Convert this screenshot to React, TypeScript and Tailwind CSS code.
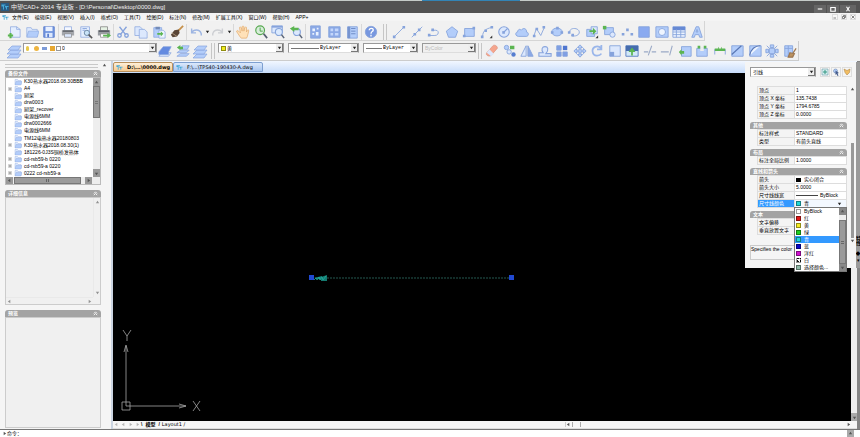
import type { ReactNode } from "react";

const B = "#86a3dc";
const F = "#b3cdfa";
const L = "#dce8fd";
const G = "#5bb551";

const art: Record<string, ReactNode> = {
  new: (<><path d="M4 2h7l4 3v9H4z" fill="#e4eefe" stroke={B} strokeWidth=".8" /><path d="M11 2v3h4" fill="none" stroke={B} strokeWidth=".8" /><path d="M4 9v6M1 12h6" stroke={G} strokeWidth="2.4" /></>),
  open: (<><path d="M2 13V3h5l1 2h6v8z" fill={L} stroke={B} strokeWidth=".7" /><path d="M2 14 4 7h12l-2 7z" fill={F} stroke={B} strokeWidth=".7" /></>),
  save: (<><path d="M2 2h12v12H2z" fill="#7094df" stroke="#5a7dcc" /><path d="M4 2h8v5H4z" fill="#e8f0ff" /><path d="M4 9h8v5H4z" fill={L} /><path d="M6 10h2v4H6z" fill="#5a7dcc" /></>),
  print: (<><path d="M4 2h8v5H4z" fill="#f5f8ff" stroke={B} strokeWidth=".8" /><path d="M1 6h14v6H1z" fill="#a4a7ac" /><path d="M2 6h12v2H2z" fill="#696c72" /><path d="M4 10h8v4H4z" fill={L} stroke="#888" strokeWidth=".8" /></>),
  preview: (<><path d="M2 2h10v12H2z" fill="#e4eefe" stroke={B} strokeWidth=".8" /><path d="M4 4h5M4 6h3" stroke={B} /><circle cx="9" cy="9" r="3" fill="#c9e3f8" stroke="#66819e" /><path d="m11 11 4 4" stroke="#555" strokeWidth="1.8" /></>),
  plot: (<><path d="M4 2h8v5H4z" fill="#e5f1e3" stroke="#777" strokeWidth=".8" /><path d="M1 6h14v6H1z" fill="#999da2" /><path d="M2 6h12v2H2z" fill="#5b5e64" /><path d="M4 10h8v4H4z" fill="#fff" stroke="#888" strokeWidth=".8" /><path d="M7 11h5V9l4 3-4 3v-2H7z" fill={G} /></>),
  cut: (<g fill="none" stroke="#86a3dc" strokeWidth="1.5"><path d="m4 2 7 9M12 2 5 11" /><circle cx="4" cy="12" r="2" /><circle cx="12" cy="12" r="2" /></g>),
  copy: (<g fill={L} stroke={B} strokeWidth=".8"><path d="M1 2h6l3 3v7H1z" /><path d="M6 5h6l3 3v7H6z" /></g>),
  paste: (<><path d="M2 3h9v11H2z" fill={F} stroke={B} strokeWidth=".8" /><path d="M4 2h5v3H4z" fill="#728bb8" /><path d="M8 6h5l2 2v7H8z" fill="#edf4ff" stroke={B} strokeWidth=".8" /><path d="M6 9h4V7l3 3-3 3v-2H6z" fill={G} /></>),
  brush: (<><path d="m15 1-6 6" stroke="#c6904a" strokeWidth="2" /><path d="m5 6 5-1 1 4-3 4-5 1-2-3z" fill="#594536" /><path d="m2 9 6 4" stroke="#b09980" /></>),
  undo: (<path d="M3 4v5h5M3 9c2-4 9-5 11 1v2" fill="none" stroke="#9db5e2" strokeWidth="1.6" />),
  redo: (<path d="M13 4v5H8M13 9C11 5 4 4 2 10v2" fill="none" stroke="#cdcfd3" strokeWidth="1.6" />),
  hand: (<path d="M5 14 1 8c-1-2 1-2 2-1l2 2-1-6c0-1 1.500-1 2 0l1 4V2c0-1 2-1 2 0v5l1-4c.5-1 2-1 2 0v5l1-2c.5-1 2-.5 1.500 1L13 13l-1 2H6z" fill="#ffe1b8" stroke="#e2aa6b" strokeWidth=".8" />),
  zoomRt: (<><circle cx="7" cy="6" r="5" fill="#d7edda" stroke="#56a84f" strokeWidth="1.3" /><path d="M7 3v4h3" fill="none" stroke="#429c3e" /><path d="m11 10 4 5" stroke="#555f70" strokeWidth="2" /></>),
  zoomWin: (<><path d="M1 1h12v8H1z" fill={L} stroke={B} /><path d="M1 1h12v2H1z" fill={B} /><circle cx="9" cy="8" r="4" fill="#dbeafe" stroke="#86a4da" strokeWidth="1.300" /><path d="m12 11 3 4" stroke="#5b6679" strokeWidth="1.800" /></>),
  zoomPrev: (<><circle cx="9" cy="8" r="4" fill={L} stroke={B} strokeWidth="1.300" /><path d="m12 11 3 4" stroke="#5b6679" strokeWidth="1.800" /><path d="M1 4l5-3v2h5v3H6v2z" fill={G} /></>),
  props: (<><path d="M3 1h11v14H3z" fill="#8ba9e6" stroke={B} /><path d="M5 4h3v3H5zM9 8h3v4H9zM5 9h2v2H5zM10 3h2v2h-2z" fill="#e9f2ff" /></>),
  center: (<><path d="M2 2h13v12H2z" fill="#8ba9e6" stroke={B} /><path d="M4 4h3v3H4zM9 4h4v3H9zM4 9h3v3H4zM9 9h4v3H9z" fill="#c4d7fb" /></>),
  palette: (<><path d="M3 2h11v13H3z" fill={F} stroke={B} /><path d="M3 2h3v13H3z" fill="#7794cf" /><path d="M7 4h5M7 7h5M7 10h5" stroke="#6684c0" /></>),
  help: (<><circle cx="8" cy="8" r="6.500" fill="#7797df" stroke="#89a3da" /><path d="M6 6c0-3 5-3 4.500 0C10 8 8 7 8 10M8 11v2" fill="none" stroke="#fff" strokeWidth="1.500" /></>),
  line: (<><path d="M3 13 13 3" stroke={B} /><path d="M1 12h3v3H1zM12 1h3v3h-3z" fill={B} /></>),
  xline: (<><path d="M2 14 14 2" stroke={B} /><path d="M4 9h3v3H4zM9 4h3v3H9z" fill={B} /></>),
  pline: (<><path d="M2 12h7c5 0 5-6 1-6H5" fill="none" stroke={B} /><path d="M1 10h3v3H1zM5 4h3v3H5z" fill={B} /></>),
  polygon: (<path d="m8 2 6.500 5L12 14H4L1.500 7z" fill={F} stroke={B} />),
  rect: (<><path d="M3 4h11v9H3z" fill={F} stroke={B} /><path d="M1 11h3v3H1zM12 2h3v3h-3z" fill={B} /></>),
  arc: (<><path d="M3 13C3 7 7 4 13 3" fill="none" stroke={B} /><path d="M1 12h3v3H1zM5 5h3v3H5zM12 1h3v3h-3z" fill={B} /><path d="M14 12v3h-3z" fill="#333" /></>),
  circle: (<><circle cx="8" cy="8" r="6" fill={L} stroke={B} strokeWidth="1.200" /><path d="m8 8 4-4" stroke={B} strokeWidth="1.300" /><path d="M6 7h3v3H6z" fill={B} /></>),
  cloud: (<path d="M4 13c-4 0-4-5-1-5 0-3 3-4 4-2 3-4 7-1 6 2 3 0 3 5 0 5z" fill={F} stroke={B} />),
  spline: (<><path d="M2 13 5 4l5 8 4-9" fill="none" stroke={B} /><path d="M1 11h3v3H1zM4 3h3v3H4zM12 1h3v3h-3z" fill={B} /></>),
  ellipse: (<><ellipse cx="8" cy="8" rx="6" ry="4.500" fill={F} stroke={B} /><path d="M1 7h3v3H1zM12 7h3v3h-3zM7 2h3v3H7z" fill={B} /></>),
  ellArc: (<><path d="M3 8c0-6 12-5 11 1-1 4-7 4-9 3" fill="none" stroke={B} /><path d="M1 7h3v3H1zM5 10h3v3H5z" fill={B} /></>),
  insert: (<><path d="M2 5h9v8H2z" fill={F} stroke={B} /><path d="M7 2h7v8H7z" fill={L} stroke={B} /><path d="M5 6h4V3l4 4-4 4V8H5z" fill={G} /><path d="M15 12v3h-3z" fill="#333" /></>),
  block: (<><path d="M3 3h10v8H3z" fill={F} stroke={B} /><circle cx="12" cy="11" r="3" fill={L} stroke={B} /><path d="M1 1h4v4H1z" fill={G} /></>),
  point: (<path d="M7 4h3v3H7zM2 9h3v3H2zM12 9h3v3h-3z" fill={B} />),
  hatch: (<path d="M2 2h12v12H2z" fill="#8aaaf0" stroke={B} />),
  region: (<><path d="M1 2h14v12H1z" fill={F} stroke={B} /><circle cx="8" cy="8" r="4" fill="#eff5ff" stroke={B} /></>),
  table: (<><path d="M1 2h14v12H1z" fill="#edf4ff" stroke={B} /><path d="M1 2h14v4H1z" fill="#6689d4" /><path d="M1 8h14M1 11h14M5 5v9M10 5v9" stroke={B} /></>),
  text: (<path d="M2 14 7 2h3l4 12h-3l-1-3H6l-1 3zM7 8h2L8 5z" fill={F} stroke={B} fillRule="evenodd" />),
  layer: (<g fill={F} stroke={B} strokeWidth=".7"><path d="m1 15 4-4h10l-3 4z" /><path d="m1 11 4-4h10l-3 4z" /><path d="m2 7 4-4h9l-3 4z" /></g>),
  layerA: (<g stroke={B} strokeWidth=".8"><path d="m1 14 4-4h10l-3 4z" fill={L} /><path d="m1 9 5-6h9l-3 6v3H1z" fill="#638ae0" /></g>),
  layerB: (<><path d="m1 14 4-3h10l-3 3zM1 10l4-3h10l-3 3zM5 6l2-4h8l-2 4z" fill={F} stroke={B} strokeWidth=".8" /><path d="m1 4 4-3v2h3v3H5v1z" fill={G} /></>),
  erase: (<><path d="m2 10 7-8c2-2 6 1 5 3l-7 8c-2 2-7 0-5-3z" fill="#f5a58d" stroke="#d78f7b" strokeWidth=".7" /><path d="m5 6 5 5-3 3-5-4z" fill={L} /></>),
  copyObj: (<><circle cx="4" cy="4" r="2.500" fill={F} stroke={B} /><path d="M8 2h5v4H8z" fill={G} /><circle cx="7" cy="9" r="2.500" fill={L} stroke={B} /><circle cx="12" cy="12" r="2.500" fill="#567ed0" /></>),
  mirror: (<><path d="M7 2v12H1z" fill={L} stroke={B} /><path d="M9 2v12h6z" fill="#8ba9e6" stroke={B} /></>),
  offset: (<path d="M1 14h14v-3H9c4-5 2-8-1-8S3 6 6 10H1z" fill={L} stroke={B} strokeWidth="1.200" />),
  array: (<><path d="M2 2h5v5H2zM2 9h5v5H2zM9 9h5v5H9z" fill="#7f9fe4" stroke={B} /><path d="M9 2h5v5H9z" fill="#4f76cf" /></>),
  move: (<path d="m8 1 3 3H9v3h3V5l3 3-3 3V9H9v3h2l-3 3-3-3h2V9H4v2L1 8l3-3v2h3V4H5z" fill={F} stroke={B} />),
  rotate: (<path d="M13 5C8 0 2 4 3 9c1 6 8 5 10 2M13 1v5H8" fill="none" stroke="#9ab6ea" strokeWidth="2" />),
  scale: (<><path d="M2 2h12v12H2z" fill={L} stroke={B} /><path d="M2 9h5v5H2z" fill={B} /></>),
  stretch: (<><path d="M1 2h14v12H1z" fill="#d2e8f8" stroke="#557abf" /><path d="M1 2h14v6H1z" fill="#456cad" /><path d="m8 4 4 5H9v4H7V9H4z" fill={G} /></>),
  trim: (<path d="M1 9h5M10 9h5M6 13l4-11" fill="none" stroke="#9aa9c6" strokeWidth="1.200" />),
  extend: (<path d="M1 9h9M11 13l3-11" fill="none" stroke="#9aa9c6" strokeWidth="1.200" />),
  breakAt: (<><path d="M4 3h11v11H4z" fill={F} stroke={B} /><path d="m1 9 3-3v2h3v3H4v2z" fill={G} /></>),
  breakObj: (<><path d="M2 5h12v9H2z" fill={F} stroke={B} /><path d="M6 4h4v4H6z" fill="#eee" /><path d="M3 2h3v3H3zM10 2h3v3h-3z" fill={G} /></>),
  join: (<><path d="M2 12V6M14 12V6" stroke={B} /><path d="M2 5h4V3l2 3 2-3v2h4v3H2z" fill={G} /></>),
  chamfer: (<><path d="M2 2h13v12H2z" fill={F} stroke={B} /><path d="M2 12 13 2" stroke="#5876b4" strokeWidth="1.300" /></>),
  fillet: (<><path d="M2 2h13v12H2z" fill={F} stroke={B} /><path d="M2 13C3 6 8 2 14 2" fill="#edf4ff" stroke="#5876b4" strokeWidth="1.200" /></>),
  explode: (<path d="M5 5h6v6H5zM6 1h4v3H6zM6 12h4v3H6zM1 6h3v4H1zM12 6h3v4h-3zM2 2l3 3M14 2l-3 3M2 14l3-3M14 14l-3-3" fill={F} stroke={B} />),
  edit: (<><path d="M2 2h9v12H2z" fill={F} stroke={B} /><path d="M2 5h9M6 2v12" stroke={B} /><path d="m15 5-4 6M8 10l5 1-2 4H6z" stroke="#9d7852" fill="#bc9260" strokeWidth="1.400" /></>),
  zw: (<path d="M1 3h8v2H6v8H4V7H1zM8 6h7v2h-3v5h-2V9H8z" fill="#45a9d6" />),
  pin: (<><path d="M2 2h12v12H2z" fill="#d9f0f0" stroke="#4c8a99" /><path d="M8 4v8M4 8h8" stroke="#329682" strokeWidth="2" /></>),
  pick: (<><circle cx="7" cy="6" r="4" fill={F} stroke="#5978a3" /><path d="m7 5 7 5-3 1 2 4-2 1-2-4-2 2z" fill="#455c8c" /></>),
  filter: (<path d="m2 2 6 3 6-3-1 7-5 5-4-5z" fill="#f2bd62" stroke="#a67d3b" />),
};

function Icon({ name, cls = "size-3.5" }: { name: string; cls?: string }) {
  return <svg viewBox="0 0 16 16" className={`${cls} shrink-0`} aria-hidden="true">{art[name]}</svg>;
}

function Tool({ name }: { name: string }) {
  return <button type="button" aria-label={name} className="flex h-4 w-4 shrink-0 items-center justify-center"><Icon name={name} cls={name === "layer" ? "size-4" : "size-3.5"} /></button>;
}

function Group({ names, width }: { names: string[]; width: string }) {
  return <div className={`flex shrink-0 items-center justify-between ${width}`}>{names.map((n) => <Tool key={n} name={n} />)}</div>;
}

function Sep() {
  return <span className="mx-px h-4 w-px shrink-0 bg-[#d8d8d8]" />;
}

function Grip() {
  return <span className="block h-4 w-1 shrink-0 border-x border-[#c6c6c6]" />;
}

function Down() {
  return <svg viewBox="0 0 6 6" className="size-[5px] shrink-0" aria-hidden="true"><path d="M1 2h4L3 5z" fill="#222" /></svg>;
}

function Combo({ label, value, width, children, disabled = false, right = false }: { label: string; value: string; width: string; children?: ReactNode; disabled?: boolean; right?: boolean }) {
  return (
    <label className={`flex h-[10px] shrink-0 items-center gap-px border border-[#999] border-b-[#ddd] pl-0.5 ${width} ${disabled ? "bg-[#f0f0f0] text-[#bbb]" : "bg-white"}`}>
      {children}
      <select aria-label={label} disabled={disabled} className={`h-2 min-w-0 appearance-none bg-transparent ${right ? "w-[24px] font-['Liberation_Mono']" : "flex-1"}`}><option>{value}</option></select>
      <span className="ml-auto flex h-2 w-[7px] items-center justify-center border-r border-b border-[#777] bg-[#eee]"><Down /></span>
    </label>
  );
}

const menus = ["文件(E)", "编辑(E)", "视图(V)", "插入(I)", "格式(O)", "工具(T)", "绘图(D)", "标注(N)", "修改(M)", "扩展工具(X)", "窗口(W)", "帮助(H)", "APP+"];

const files: [string, boolean][] = [
  ["K30热水器2018.08.30BBB", false], ["A4", true], ["厨架", false], ["drw0003", false], ["厨架_recover", false], ["电源线6MM", false], ["drw0002666", false],
  ["电源线6MM", false], ["TM12电热水器20180803", false], ["K30热水器2018.08.30(1)", true], ["181226-0J3S铜桥发热体", false], ["cd-rsb59-b 0220", true], ["cd-rsb59-a 0220", true], ["0222 cd-rsb59-a", true],
];

function Header({ title }: { title: string }) {
  return (
    <h2 className="flex h-[7px] items-center justify-between rounded-t-[3px] bg-[#a3a3a3] px-[3px] font-bold text-white">
      <span>{title}</span>
      <svg viewBox="0 0 6 6" className="size-[5px]" aria-hidden="true"><path d="m1 3 2-2 2 2M1 5l2-2 2 2" fill="none" stroke="white" /></svg>
    </h2>
  );
}

function Arrow({ dir }: { dir: "left" | "right" | "up" | "down" }) {
  const d = { left: "M4 1v4L1 3z", right: "M2 1v4l3-2z", up: "M1 4h4L3 1z", down: "M1 2h4L3 5z" }[dir];
  return <svg viewBox="0 0 6 6" className="size-[5px] shrink-0" aria-hidden="true"><path d={d} fill="#555" /></svg>;
}

function Explorer() {
  return (
    <aside className="flex w-[113px] shrink-0 flex-col border-r-2 border-[#cbd5e2] bg-[#f5f5f5] pl-[5px] pr-[10px]">
      <div className="flex h-[9px] items-center gap-1">
        <span className="h-1 w-[93px] shrink-0 border-y border-[#c9c9c9]" />
        <button type="button" aria-label="隐藏" className="shrink-0"><Arrow dir="up" /></button>
      </div>
      <Header title="备份文件" />
      <div className="border border-[#bbb] bg-white">
        <div className="flex h-[99px]">
          <ul className="flex min-w-0 flex-1 flex-col justify-between overflow-hidden">
            {files.map(([name, plus], i) => (
              <li key={i} className="flex h-[7px] items-center gap-0.5 whitespace-nowrap">
                <span className="ml-px flex w-[5px] shrink-0 justify-center">{plus && <svg viewBox="0 0 5 5" className="size-1"><path d="M.5.5h4v4h-4z" fill="#fff" stroke="#aaa" strokeWidth=".6" /><path d="M1 2.500h3M2.500 1v3" stroke="#555" strokeWidth=".7" /></svg>}</span>
                <Icon name="open" cls="size-2" />
                <span>{name}</span>
              </li>
            ))}
          </ul>
          <div className="flex w-[7px] shrink-0 flex-col bg-[#eee]">
            <span className="flex h-2 items-center justify-center bg-[#999]"><Arrow dir="up" /></span>
            <span className="flex h-8 items-center justify-center border border-[#777] bg-[#9b9b9b]"><span className="h-[3px] w-[3px] border-y border-[#777]" /></span>
            <span className="mt-auto flex h-2 items-center justify-center bg-[#999]"><Arrow dir="down" /></span>
          </div>
        </div>
        <div className="flex h-[7px] gap-px bg-[#eee] pr-2">
          <span className="flex w-[7px] items-center justify-center bg-[#999]"><Arrow dir="left" /></span>
          <span className="flex w-[67px] items-center justify-center border border-[#777] bg-[#9b9b9b]"><span className="h-[3px] w-[3px] border-x border-[#666]" /></span>
          <span className="ml-auto flex w-[7px] items-center justify-center bg-[#999]"><Arrow dir="right" /></span>
        </div>
      </div>
      <div className="mt-[5px]"><Header title="详细信息" /></div>
      <div className="flex h-[108px] flex-col border border-[#ccc] bg-[#f0f0f0]">
        <div className="flex flex-1 justify-end"><div className="flex w-[7px] flex-col items-center justify-between border-l border-[#e5e5e5] py-0.5 opacity-60"><Arrow dir="up" /><Arrow dir="down" /></div></div>
        <div className="mr-[7px] flex h-[7px] items-center justify-between border-t border-[#e5e5e5] px-px opacity-60"><Arrow dir="left" /><Arrow dir="right" /></div>
      </div>
      <div className="mt-[5px]"><Header title="预览" /></div>
      <div className="mb-px flex-1 border border-[#ccc] bg-[#f0f0f0]" />
    </aside>
  );
}

function Ucs() {
  return (
    <svg viewBox="0 0 90 90" className="absolute bottom-[5px] left-[7px] size-[90px]" aria-label="坐标">
      <g fill="none" stroke="#a5a5a5" strokeWidth=".8">
        <path d="M2 76h8v8H2zM6 80V20M4 26l2-7 2 7M6 80h60M59 78l7 2-7 2" />
        <path d="m3 4 4 6 4-6M7 10v5M73 75l7 10M80 75l-7 10" />
      </g>
    </svg>
  );
}

function Rows({ rows }: { rows: [string, ReactNode, boolean?][] }) {
  return (
    <table className="ml-[7px] w-[90px] table-fixed border-collapse">
      <colgroup><col className="w-[37px]" /><col /></colgroup>
      <tbody>
        {rows.map(([k, v, on]) => (
          <tr key={k} className="h-2">
            <th className={`h-2 overflow-hidden whitespace-nowrap border border-[#ddd] p-0 pl-px text-left font-normal ${on ? "bg-[#3399ff] text-white" : "bg-[#f4f4f4]"}`}>{k}</th>
            <td className={`h-2 border border-[#ddd] p-0 pl-px whitespace-nowrap ${on ? "bg-[#f3f8ff]" : "bg-white"}`}>{v}</td>
          </tr>
        ))}
      </tbody>
    </table>
  );
}

const colors: [string, string][] = [["ByBlock", "bg-white"], ["红", "bg-[#e01818]"], ["黄", "bg-[#f6ec22]"], ["绿", "bg-[#20d020]"], ["青", "bg-[#20d8d8]"], ["蓝", "bg-[#0808c8]"], ["洋红", "bg-[#d010d0]"], ["白", "bg-[linear-gradient(45deg,#111_50%,#fff_50%)]"], ["选择颜色...", "bg-[#8fb9a8]"]];

function Swatch({ color }: { color: string }) {
  return <span className={`size-[5px] shrink-0 border border-black/40 ${color}`} />;
}

function Properties() {
  return (
    <section className="absolute top-px right-0 z-10 flex h-[206px] w-[115px] bg-[#f5f5f5]">
      <div className="w-[103px] shrink-0 pl-[5px] pt-[5px]">
        <div className="flex h-[10px] w-[104px] items-center">
          <Combo label="对象" value="引线" width="w-[66px]" />
          <div className="ml-1 flex shrink-0 gap-px">{["pin", "pick", "filter"].map((n) => <button type="button" key={n} aria-label={n} className="flex size-[10px] items-center justify-center border border-[#ddd]"><Icon name={n} cls="size-2" /></button>)}</div>
        </div>
        <div className="mt-[9px] w-[97px]">
          <Rows rows={[["顶点", "1"], ["顶点 X 坐标", "135.7438"], ["顶点 Y 坐标", "1794.6785"], ["顶点 Z 坐标", "0.0000"]]} />
          <div className="mt-[3px]"><Header title="其他" /></div>
          <Rows rows={[["标注样式", "STANDARD"], ["类型", "有箭头直线"]]} />
          <div className="mt-[3px]"><Header title="布局" /></div>
          <Rows rows={[["标注全局比例", "1.0000"]]} />
          <div className="mt-[3px]"><Header title="直线和箭头" /></div>
          <Rows rows={[
            ["箭头", <span className="flex items-center gap-[3px]"><span className="h-1 w-[5px] bg-black" />实心闭合</span>],
            ["箭头大小", "5.0000"],
            ["尺寸线线宽", <span className="flex items-center gap-0.5"><span className="h-px w-[22px] bg-[#444]" />ByBlock</span>],
            ["尺寸线颜色", <span className="flex items-center gap-[3px] pr-1"><Swatch color="bg-[#20d8d8]" />青<span className="ml-auto"><Down /></span></span>, true],
          ]} />
          <div className="mt-[3px]"><Header title="文本" /></div>
          <Rows rows={[["文字偏移", ""], ["垂直放置文字", ""]]} />
          <p className="mt-[10px] h-[15px] w-[97px] whitespace-nowrap border border-[#ccc]">Specifies the color</p>
        </div>
      </div>
      <div className="flex w-2 flex-col items-center pb-[25px] pt-[25px]">
        <Arrow dir="up" />
        <span className="mt-[51px] w-[3px] flex-1 bg-[#999]" />
        <Arrow dir="down" />
      </div>
      <div className="flex w-1 flex-col items-center justify-end overflow-hidden bg-[#9a9a9a] pb-1">
        <span className="leading-[4px] font-bold [writing-mode:vertical-rl]">特性</span>
        <span className="mt-1">◆</span>
        <span>▾</span>
      </div>
      <div className="absolute top-[145px] left-[49px] flex h-[65px] w-[53px] border border-[#777] bg-white">
        <ul role="listbox" aria-label="尺寸线颜色" className="flex min-w-0 flex-1 flex-col justify-between overflow-hidden">
          {colors.map(([name, bg]) => (
            <li key={name} role="option" aria-selected={name === "青"} className={`flex h-[7px] shrink-0 items-center gap-[3px] whitespace-nowrap pl-px ${name === "青" ? "bg-[#3399ff] text-white" : ""}`}><Swatch color={bg} />{name}</li>
          ))}
        </ul>
        <div className="flex w-[7px] shrink-0 flex-col bg-[#eee]">
          <span className="flex h-[7px] items-center justify-center bg-[#888]"><Arrow dir="up" /></span>
          <span className="mt-[5px] flex flex-1 items-center justify-center border border-[#777] bg-[#999]"><span className="h-[3px] w-[3px] border-y border-[#666]" /></span>
          <span className="flex h-[7px] items-center justify-center bg-[#888]"><Arrow dir="down" /></span>
        </div>
      </div>
    </section>
  );
}

export default function App() {
  return (
    <div className="relative flex h-screen flex-col overflow-hidden bg-[#f1f1f1] font-['Liberation_Sans','Noto_Sans_CJK_SC',sans-serif] text-[5px] leading-[7px] text-black">
      <div className="flex h-px shrink-0 justify-center bg-[#c5cbc8]"><span className="ml-[82px] w-[98px] bg-[#3384b5]" /></div>
      <header className="flex h-3 shrink-0 items-center bg-[#525252] pl-px text-[6px] text-[#f0f0f0]">
        <span className="mr-0.5 flex size-2 items-center justify-center bg-[#285b83]"><Icon name="zw" cls="size-2" /></span>
        <h1>中望CAD+ 2014 专业版 - [D:\Personal\Desktop\0000.dwg]</h1>
        <div className="ml-auto flex h-full items-end gap-px pr-1">
          {["最小化", "最大化", "关闭"].map((n, i) => (
            <button type="button" key={n} aria-label={n} className={`flex h-2 items-center justify-center bg-[#656565] ${i === 2 ? "w-4" : "w-3"}`}>
              <svg viewBox="0 0 8 8" className="size-1.5"><path d={["M1 4h6", "M1 2h6v5H1z", "m2 1 4 6M6 1 2 7"][i]} fill="none" stroke="#fff" strokeWidth="1.500" /></svg>
            </button>
          ))}
        </div>
      </header>
      <nav className="flex h-2 shrink-0 items-center bg-[#f4f4f4] pl-0.5">
        <Icon name="zw" cls="size-[7px]" />
        <div className="ml-[3px] flex gap-1.5">{menus.map((m) => <button type="button" key={m}>{m}</button>)}</div>
        <div className="ml-auto flex gap-[3px] pr-1">
          {["M1 6h5", "M1 3h4v4H1zM3 3V1h4v4H5", "m1 1 6 6M7 1 1 7"].map((d, i) => <button type="button" key={d} aria-label={["最小化文档", "还原文档", "关闭文档"][i]} className="flex size-1.5 items-center justify-center border border-[#ddd] bg-[#f8f8f8]"><svg viewBox="0 0 8 8" className="size-1"><path d={d} fill="none" stroke="#555" strokeWidth="1.400" /></svg></button>)}
        </div>
      </nav>
      <div className="flex h-5 w-[705px] shrink-0 items-center border-r border-b border-[#d5d5d5] pt-0.5 pl-1.5">
        <Group names={["new", "open", "save"]} width="w-[51px]" /><Sep />
        <span className="w-px" /><Group names={["print", "preview", "plot"]} width="w-[52px]" /><Sep />
        <Group names={["cut", "copy", "paste", "brush"]} width="w-[70px]" /><Sep />
        <span className="w-px" /><Tool name="undo" /><span className="ml-px"><Down /></span><Tool name="redo" /><span className="ml-px"><Down /></span><Sep />
        <Group names={["hand", "zoomRt", "zoomWin", "zoomPrev"]} width="w-[69px]" /><Sep />
        <Group names={["props", "center", "palette"]} width="w-[53px]" /><Sep />
        <Tool name="help" /><span className="mx-1"><Grip /></span>
        <Group names={["line", "xline", "pline", "polygon", "rect", "arc", "circle", "cloud", "spline", "ellipse", "ellArc", "insert", "block", "point", "hatch", "region", "table", "text"]} width="w-[314px]" />
      </div>
      <div className="flex h-5 w-[799px] shrink-0 items-center border-r border-b border-[#ccc] pl-1.5">
        <Tool name="layer" />
        <div className="flex h-full w-[136px] flex-col pl-px pt-0.5">
          <Combo label="图层" value="0" width="w-[134px]">
            <span className="h-[5px] w-[3px] rounded-full bg-[#e8c84b]" /><span className="ml-1 size-[5px] rounded-full bg-[#eeb541]" /><span className="ml-0.5 h-[3px] w-[5px] bg-[#7c9bd8]" /><span className="ml-0.5 size-[5px] bg-[#e7a832]" /><Swatch color="bg-white" />
          </Combo>
        </div>
        <span className="w-px" /><Group names={["layerA", "layerB", "layer"]} width="w-[51px]" />
        <span className="mx-[3px]"><Grip /></span>
        <div className="flex h-full gap-1 pt-0.5">
          <Combo label="颜色" value="黄" width="w-[66px]"><Swatch color="bg-[#f0ec1c]" /></Combo>
          <Combo label="线型" value="ByLayer" width="w-[71px]" right><span className="h-px w-7 bg-[#777]" /></Combo>
          <Combo label="线宽" value="ByLayer" width="w-[55px]" right><span className="h-px w-4 bg-[#777]" /></Combo>
          <Combo label="打印样式" value="ByColor" width="w-[54px]" disabled />
        </div>
        <span className="mx-0.5"><Grip /></span>
        <Group names={["erase", "copyObj", "mirror", "offset", "array", "move", "rotate", "scale", "stretch", "trim", "extend", "breakAt", "breakObj", "join", "chamfer", "fillet", "explode", "edit"]} width="w-[314px]" />
      </div>
      <main className="relative flex min-h-0 flex-1">
        <Explorer />
        <div className="flex min-w-0 flex-1 flex-col border-r-[3px] border-[#858585]">
          <div className="flex h-3 shrink-0 items-end bg-linear-to-b from-[#f2f7ff] to-[#c7dcfa] pb-px font-['DejaVu_Sans']">
            <button type="button" className="flex h-[10px] w-[60px] items-center gap-1 rounded-t-[2px] border border-[#b9905c] bg-linear-to-b from-[#fff0d9] to-[#f6c98e] pl-0.5 font-bold whitespace-nowrap"><Icon name="zw" cls="size-[7px]" />D:\...\0000.dwg</button>
            <button type="button" className="flex h-[10px] w-[90px] items-center gap-1 rounded-t-[2px] border border-[#7d9fd0] bg-linear-to-b from-[#dce9fc] to-[#a9c6ef] pl-0.5 whitespace-nowrap"><Icon name="zw" cls="size-[7px]" />F:\...\TPS40-190430-A.dwg</button>
          </div>
          <div className="flex min-h-0 flex-1">
            <div className="relative flex-1 overflow-hidden bg-black">
              <svg viewBox="0 0 210 12" className="absolute top-[199px] left-[194px] h-3 w-[210px]" aria-label="引线">
                <path d="M8 6h195" stroke="#2f6f65" strokeWidth=".8" strokeDasharray="2 1" />
                <path d="m7 6 8-2v4z" fill="#17877c" /><path d="m14 5 6-2v6h-6z" fill="#147a70" /><path d="m7 8 2-2 1 2 2-3 1 3 2-3 1 3 3-4" stroke="#23ab9d" fill="none" strokeWidth=".8" />
                <path d="M2 3h5v5H2zM202 3h5v5h-5z" fill="#2149d1" />
              </svg>
              <Ucs />
            </div>
            <div className="flex w-[6px] flex-col justify-end bg-[#eee]"><span className="flex h-2 items-center justify-center bg-[#aaa]"><Arrow dir="down" /></span></div>
          </div>
          <div className="flex h-[7px] shrink-0 items-center bg-[#f6f6f6] pr-1.5">
            <div className="flex w-7 items-center justify-around opacity-40"><Arrow dir="left" /><Arrow dir="left" /><Arrow dir="right" /><Arrow dir="right" /></div>
            <button type="button" className="flex items-center gap-[3px] font-bold"><span>\</span><span>模型</span><span>/</span></button>
            <button type="button" className="ml-0.5 font-['DejaVu_Sans']">Layout1 /</button>
            <div className="ml-auto flex w-[286px] items-center border-l border-[#ccc]"><Arrow dir="left" /><span className="ml-px h-[5px] w-[9px] border-x border-[#aaa]" /><span className="ml-auto"><Arrow dir="right" /></span></div>
          </div>
          <div className="h-px shrink-0 bg-[#ddd]" />
        </div>
        <Properties />
      </main>
      <footer className="flex h-2 shrink-0 items-center border-t border-[#777] bg-white pl-0.5 pr-1.5">
        <Arrow dir="right" />
        <label htmlFor="command">命令：</label>
        <input id="command" className="h-1.5 min-w-0 flex-1 bg-transparent outline-none" />
        <span className="flex h-[7px] w-[7px] items-center justify-center bg-[#aaa]"><Arrow dir="up" /></span>
      </footer>
    </div>
  );
}
